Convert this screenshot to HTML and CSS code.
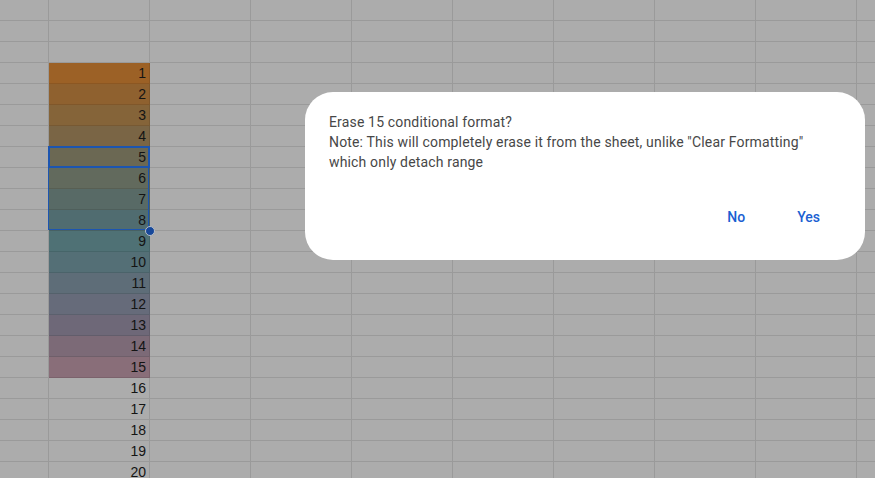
FILE: index.html
```html
<!DOCTYPE html>
<html>
<head>
<meta charset="utf-8">
<link rel="stylesheet" href="styles.css">
</head>
<body>
<div class="sheet">
  <div class="grid">
    <div class="c"></div><div class="c"></div><div class="c"></div><div class="c"></div><div class="c"></div><div class="c"></div><div class="c"></div><div class="c"></div><div class="c"></div><div class="c"></div>
    <div class="c"></div><div class="c"></div><div class="c"></div><div class="c"></div><div class="c"></div><div class="c"></div><div class="c"></div><div class="c"></div><div class="c"></div><div class="c"></div>
    <div class="c"></div><div class="c"></div><div class="c"></div><div class="c"></div><div class="c"></div><div class="c"></div><div class="c"></div><div class="c"></div><div class="c"></div><div class="c"></div>
    <div class="c"></div><div class="c n" style="background:#9c6126">1</div><div class="c"></div><div class="c"></div><div class="c"></div><div class="c"></div><div class="c"></div><div class="c"></div><div class="c"></div><div class="c"></div>
    <div class="c"></div><div class="c n" style="background:#8f612f">2</div><div class="c"></div><div class="c"></div><div class="c"></div><div class="c"></div><div class="c"></div><div class="c"></div><div class="c"></div><div class="c"></div>
    <div class="c"></div><div class="c n" style="background:#856439">3</div><div class="c"></div><div class="c"></div><div class="c"></div><div class="c"></div><div class="c"></div><div class="c"></div><div class="c"></div><div class="c"></div>
    <div class="c"></div><div class="c n" style="background:#7a6545">4</div><div class="c"></div><div class="c"></div><div class="c"></div><div class="c"></div><div class="c"></div><div class="c"></div><div class="c"></div><div class="c"></div>
    <div class="c"></div><div class="c n" style="background:#6b6853">5</div><div class="c"></div><div class="c"></div><div class="c"></div><div class="c"></div><div class="c"></div><div class="c"></div><div class="c"></div><div class="c"></div>
    <div class="c"></div><div class="c n" style="background:#626a5d">6</div><div class="c"></div><div class="c"></div><div class="c"></div><div class="c"></div><div class="c"></div><div class="c"></div><div class="c"></div><div class="c"></div>
    <div class="c"></div><div class="c n" style="background:#586a66">7</div><div class="c"></div><div class="c"></div><div class="c"></div><div class="c"></div><div class="c"></div><div class="c"></div><div class="c"></div><div class="c"></div>
    <div class="c"></div><div class="c n" style="background:#506c70">8</div><div class="c"></div><div class="c"></div><div class="c"></div><div class="c"></div><div class="c"></div><div class="c"></div><div class="c"></div><div class="c"></div>
    <div class="c"></div><div class="c n" style="background:#4f7175">9</div><div class="c"></div><div class="c"></div><div class="c"></div><div class="c"></div><div class="c"></div><div class="c"></div><div class="c"></div><div class="c"></div>
    <div class="c"></div><div class="c n" style="background:#546f76">10</div><div class="c"></div><div class="c"></div><div class="c"></div><div class="c"></div><div class="c"></div><div class="c"></div><div class="c"></div><div class="c"></div>
    <div class="c"></div><div class="c n" style="background:#5e6d78">11</div><div class="c"></div><div class="c"></div><div class="c"></div><div class="c"></div><div class="c"></div><div class="c"></div><div class="c"></div><div class="c"></div>
    <div class="c"></div><div class="c n" style="background:#666b7a">12</div><div class="c"></div><div class="c"></div><div class="c"></div><div class="c"></div><div class="c"></div><div class="c"></div><div class="c"></div><div class="c"></div>
    <div class="c"></div><div class="c n" style="background:#6e6878">13</div><div class="c"></div><div class="c"></div><div class="c"></div><div class="c"></div><div class="c"></div><div class="c"></div><div class="c"></div><div class="c"></div>
    <div class="c"></div><div class="c n" style="background:#7c6a77">14</div><div class="c"></div><div class="c"></div><div class="c"></div><div class="c"></div><div class="c"></div><div class="c"></div><div class="c"></div><div class="c"></div>
    <div class="c"></div><div class="c n" style="background:#896e79">15</div><div class="c"></div><div class="c"></div><div class="c"></div><div class="c"></div><div class="c"></div><div class="c"></div><div class="c"></div><div class="c"></div>
    <div class="c"></div><div class="c n">16</div><div class="c"></div><div class="c"></div><div class="c"></div><div class="c"></div><div class="c"></div><div class="c"></div><div class="c"></div><div class="c"></div>
    <div class="c"></div><div class="c n">17</div><div class="c"></div><div class="c"></div><div class="c"></div><div class="c"></div><div class="c"></div><div class="c"></div><div class="c"></div><div class="c"></div>
    <div class="c"></div><div class="c n">18</div><div class="c"></div><div class="c"></div><div class="c"></div><div class="c"></div><div class="c"></div><div class="c"></div><div class="c"></div><div class="c"></div>
    <div class="c"></div><div class="c n">19</div><div class="c"></div><div class="c"></div><div class="c"></div><div class="c"></div><div class="c"></div><div class="c"></div><div class="c"></div><div class="c"></div>
    <div class="c"></div><div class="c n">20</div><div class="c"></div><div class="c"></div><div class="c"></div><div class="c"></div><div class="c"></div><div class="c"></div><div class="c"></div><div class="c"></div>
  </div>
  <div class="range"></div>
  <div class="active"></div>
  <div class="handle"></div>

  <div class="dialog">
    <div class="msg">
      <p>Erase 15 conditional format?</p>
      <p>Note: This will completely erase it from the sheet, unlike "Clear Formatting" which only detach range</p>
    </div>
    <div class="actions">
      <button class="btn">No</button>
      <button class="btn">Yes</button>
    </div>
  </div>
</div>
</body>
</html>
```

FILE: styles.css
```css
html, body {
  margin: 0;
  padding: 0;
  width: 875px;
  height: 478px;
  overflow: hidden;
  background: #acacac;
}

.sheet {
  position: relative;
  width: 875px;
  height: 478px;
  overflow: hidden;
}

.grid {
  display: grid;
  grid-template-columns: 49px repeat(9, 101px);
  grid-auto-rows: 21px;
}

.c {
  box-sizing: border-box;
  border-right: 1px solid rgba(0, 0, 0, 0.1);
  border-bottom: 1px solid rgba(0, 0, 0, 0.1);
  background: #acacac;
}

.n {
  display: flex;
  align-items: flex-end;
  justify-content: flex-end;
  padding: 0 3px 1px 0;
  font-family: "Liberation Sans", Arial, sans-serif;
  font-size: 14px;
  line-height: 17px;
  color: #141414;
}

.range {
  position: absolute;
  left: 48px;
  top: 146px;
  width: 101px;
  height: 84px;
  box-sizing: border-box;
  border: 1px solid #1c55b0;
}

.active {
  position: absolute;
  left: 48px;
  top: 146px;
  width: 102px;
  height: 22px;
  box-sizing: border-box;
  border: 2px solid #1c55b0;
}

.handle {
  position: absolute;
  left: 145px;
  top: 226px;
  width: 8px;
  height: 8px;
  border-radius: 50%;
  background: #17489a;
  border: 1px solid #b9bfc9;
}

.dialog {
  position: absolute;
  left: 305px;
  top: 92px;
  width: 560px;
  height: 168px;
  box-sizing: border-box;
  background: #ffffff;
  border-radius: 28px;
  padding: 20px 24px 20px 24px;
  display: flex;
  flex-direction: column;
  justify-content: space-between;
  font-family: Roboto, "Noto Sans", sans-serif;
}

.msg {
  font-size: 14px;
  line-height: 20px;
  letter-spacing: 0.16px;
  color: #474747;
  width: 500px;
}

.msg p {
  margin: 0;
}

.actions {
  display: flex;
  justify-content: flex-end;
  gap: 12px;
  padding-right: 1px;
  margin-bottom: 13px;
}

.btn {
  border: none;
  background: transparent;
  font-family: Roboto, "Noto Sans", sans-serif;
  font-size: 14px;
  font-weight: 500;
  color: #1a5fd2;
  padding: 0 20px;
  height: 20px;
  line-height: 20px;
  cursor: pointer;
}
```
